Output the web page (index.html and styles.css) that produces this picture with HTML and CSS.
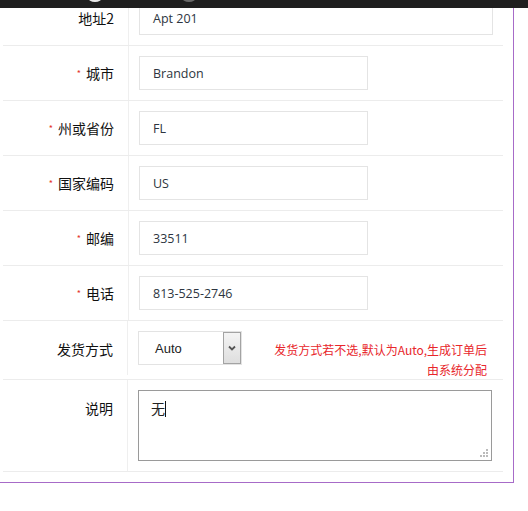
FILE: index.html
```html
<!DOCTYPE html>
<html lang="zh">
<head>
<meta charset="utf-8">
<title>地址信息</title>
<link rel="stylesheet" href="styles.css">
</head>
<body>
<div class="topbar">
  <span class="tb-icon tb-a"></span>
  <span class="tb-icon tb-b"></span>
</div>
<div class="panel">
  <div class="form">
    <div class="row">
      <div class="label">地址2</div>
      <div class="value"><div class="input wide">Apt 201</div></div>
    </div>
    <div class="row">
      <div class="label"><span class="req">*</span>城市</div>
      <div class="value"><div class="input">Brandon</div></div>
    </div>
    <div class="row">
      <div class="label"><span class="req">*</span>州或省份</div>
      <div class="value"><div class="input">FL</div></div>
    </div>
    <div class="row">
      <div class="label"><span class="req">*</span>国家编码</div>
      <div class="value"><div class="input">US</div></div>
    </div>
    <div class="row">
      <div class="label"><span class="req">*</span>邮编</div>
      <div class="value"><div class="input">33511</div></div>
    </div>
    <div class="row">
      <div class="label"><span class="req">*</span>电话</div>
      <div class="value"><div class="input">813-525-2746</div></div>
    </div>
    <div class="row row-ship">
      <div class="label label-ship">发货方式</div>
      <div class="value value-ship">
        <div class="select">
          <span class="select-text">Auto</span>
          <span class="select-btn">
            <svg width="8" height="6" viewBox="0 0 8 6"><path d="M1 1.5 L4 4.5 L7 1.5" fill="none" stroke="#555" stroke-width="1.8"/></svg>
          </span>
        </div>
        <div class="note">发货方式若不选,默认为Auto,生成订单后<br>由系统分配</div>
      </div>
    </div>
    <div class="row row-memo">
      <div class="label label-memo">说明</div>
      <div class="value">
        <div class="textarea"><span class="ta-text">无</span><span class="caret"></span>
          <svg class="grip" width="8" height="8" viewBox="0 0 8 8">
            <rect x="6" y="0" width="2" height="2" fill="#bbb"/>
            <rect x="3" y="3" width="2" height="2" fill="#bbb"/>
            <rect x="6" y="3" width="2" height="2" fill="#bbb"/>
            <rect x="0" y="6" width="2" height="2" fill="#bbb"/>
            <rect x="3" y="6" width="2" height="2" fill="#bbb"/>
            <rect x="6" y="6" width="2" height="2" fill="#bbb"/>
          </svg>
        </div>
      </div>
    </div>
  </div>
</div>
</body>
</html>
```

FILE: styles.css
```css
html, body {
  margin: 0;
  padding: 0;
  background: #fff;
}
body {
  font-family: "Noto Sans CJK SC", "Noto Sans", sans-serif;
  font-size: 14px;
  color: #111;
  overflow: hidden;
}
.topbar {
  position: fixed;
  top: 0;
  left: 0;
  right: 0;
  height: 8px;
  background: #1f1f1f;
  z-index: 5;
}
.tb-icon {
  position: absolute;
  top: -6px;
  width: 14px;
  height: 8px;
  border-radius: 50%;
}
.tb-a { left: 88px; background: #e8e8e8; }
.tb-b { left: 182px; background: #6a6a6a; }

.panel {
  width: 513px;
  margin-top: -9px;
  border-right: 1px solid #a76bc8;
  border-bottom: 1px solid #a76bc8;
  padding-bottom: 10px;
}
.form {
  margin-left: 3px;
  width: 500px;
}
.row {
  display: flex;
  height: 54px;
  border-bottom: 1px solid #ececec;
}
.label {
  width: 111px;
  padding-right: 14px;
  border-right: 1px solid #efefef;
  display: flex;
  align-items: center;
  justify-content: flex-end;
  color: #111;
  line-height: 20px;
}
.req {
  color: #e4322b;
  font-size: 9px;
  margin-right: 5px;
  margin-top: 1px;
}
.value {
  flex: 1;
  padding: 10px 0 0 10px;
  display: flex;
  align-items: flex-start;
}
.input {
  box-sizing: border-box;
  width: 229px;
  height: 34px;
  border: 1px solid #e4e4e4;
  padding-left: 13px;
  display: flex;
  align-items: center;
  font-family: "Open Sans", "Noto Sans", sans-serif;
  font-size: 12.5px;
  color: #2d3540;
}
.input.wide { width: 354px; }

.row-ship {
  height: 58px;
  align-items: flex-start;
}
.label-ship {
  height: 54px;
  padding-top: 2px;
  box-sizing: border-box;
  width: 125px;
}
.select {
  box-sizing: border-box;
  width: 104px;
  height: 34px;
  border: 1px solid #e3e3e3;
  display: flex;
  align-items: center;
  justify-content: space-between;
}
.select-text {
  font-family: "Liberation Sans", Arial, sans-serif;
  font-size: 13px;
  color: #222;
  padding-left: 16px;
}
.select-btn {
  box-sizing: border-box;
  width: 18px;
  height: 32px;
  border: 1px solid #a3a3a3;
  background: linear-gradient(#f4f4f4, #dedede);
  display: flex;
  align-items: center;
  justify-content: center;
}
.value-ship {
  justify-content: space-between;
  padding-right: 16px;
}
.note {
  margin-top: 9px;
  text-align: right;
  color: #e8262b;
  font-size: 12px;
  line-height: 20px;
}

.row-memo {
  height: 91px;
}
.label-memo {
  align-items: flex-start;
  padding-top: 18px;
  box-sizing: border-box;
  width: 125px;
}
.textarea {
  position: relative;
  box-sizing: border-box;
  width: 354px;
  height: 71px;
  border: 1px solid #9a9a9a;
  padding: 7px 0 0 12px;
  display: flex;
  align-items: flex-start;
  line-height: 20px;
  color: #222;
}
.caret {
  display: inline-block;
  width: 1px;
  height: 16px;
  background: #111;
  margin-top: 3px;
}
.grip {
  position: absolute;
  right: 3px;
  bottom: 3px;
}
```
